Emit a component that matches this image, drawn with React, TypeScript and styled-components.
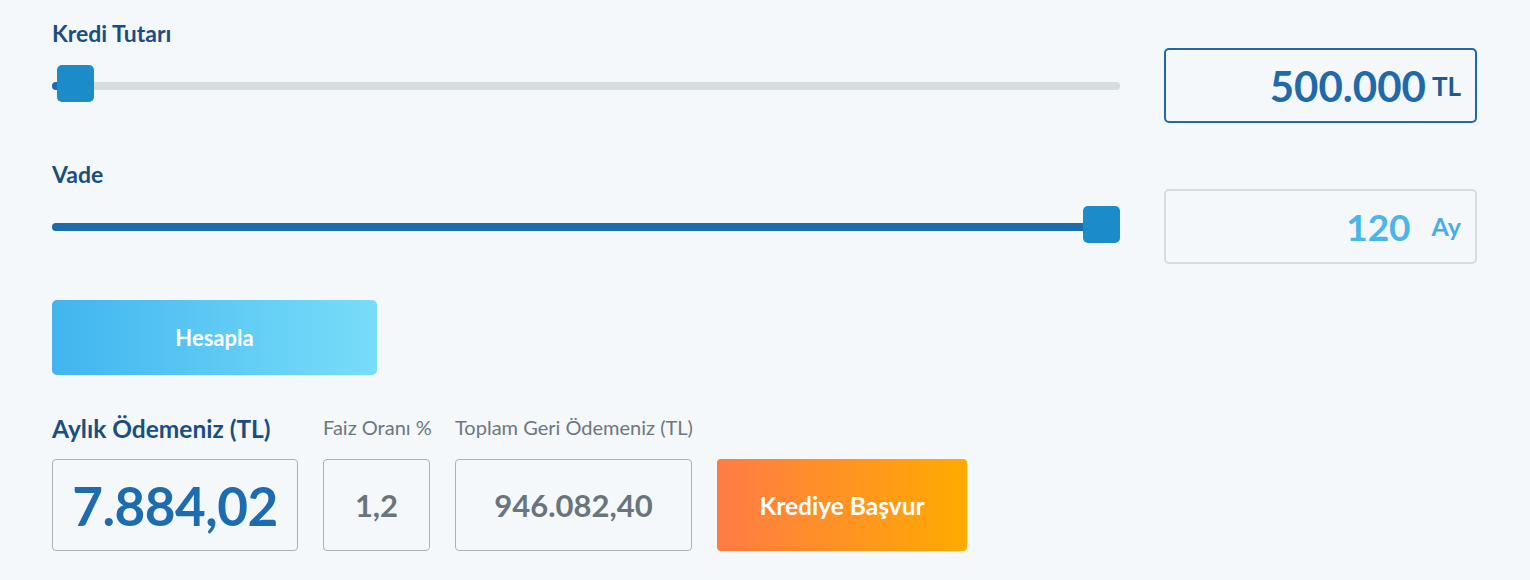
import styled, { createGlobalStyle } from "styled-components";

const GlobalStyle = createGlobalStyle`
  html, body {
    margin: 0;
    padding: 0;
    background: #f4f8fb;
    font-family: Lato, "Open Sans", sans-serif;
  }
  * {
    box-sizing: border-box;
  }
`;

const Page = styled.div`
  padding: 18px 53px 0 52px;
  display: flex;
  flex-direction: column;
`;

const Field = styled.div`
  display: flex;
  flex-direction: column;
  margin-bottom: 36px;
`;

const Label = styled.div`
  font-size: 23px;
  line-height: 30px;
  font-weight: 700;
  color: #1b4e80;
`;

const FieldRow = styled.div`
  display: flex;
  align-items: center;
  gap: 44px;
`;

const Track = styled.div`
  position: relative;
  flex: 1;
  height: 8px;
  border-radius: 4px;
  background: #d5dde1;
`;

const Fill = styled.div`
  position: absolute;
  left: 0;
  top: 0;
  bottom: 0;
  border-radius: 4px 0 0 4px;
  background: #1c6cb0;
`;

const Thumb = styled.div`
  position: absolute;
  top: 50%;
  width: 37px;
  height: 37px;
  margin-top: -21px;
  border-radius: 5px;
  background: #1b8cc7;
`;

const ValueBox = styled.div<{ $active?: boolean }>`
  width: 313px;
  height: 75px;
  display: flex;
  align-items: center;
  justify-content: flex-end;
  padding-right: 14px;
  border: 2px solid ${(p) => (p.$active ? "#1f69a8" : "#d4dce1")};
  border-radius: 5px;
  gap: ${(p) => (p.$active ? "6px" : "21px")};
`;

const Amount = styled.span<{ $active?: boolean }>`
  font-weight: 700;
  font-size: ${(p) => (p.$active ? "42px" : "37px")};
  line-height: 1;
  color: ${(p) => (p.$active ? "#1e6aab" : "#4bb4ea")};
`;

const Unit = styled.span<{ $active?: boolean }>`
  font-weight: 700;
  font-size: ${(p) => (p.$active ? "26px" : "25px")};
  line-height: 1;
  color: ${(p) => (p.$active ? "#1d5b93" : "#4aaee6")};
`;

const PrimaryButton = styled.button`
  width: 325px;
  height: 75px;
  border: none;
  border-radius: 5px;
  background: linear-gradient(90deg, #41b5f0 0%, #78ddf9 100%);
  color: #fff;
  font-family: inherit;
  font-size: 22px;
  font-weight: 700;
  margin-bottom: 37px;
  cursor: pointer;
`;

const Results = styled.div`
  display: flex;
  align-items: flex-end;
  gap: 25px;
`;

const ResultCol = styled.div<{ $w: number }>`
  width: ${(p) => p.$w}px;
  flex: none;
  display: flex;
  flex-direction: column;
`;

const ResultLabel = styled.div<{ $main?: boolean }>`
  font-size: ${(p) => (p.$main ? "24.5px" : "20px")};
  font-weight: ${(p) => (p.$main ? 700 : 400)};
  line-height: 30px;
  white-space: nowrap;
  color: ${(p) => (p.$main ? "#1b4e80" : "#6c7780")};
  margin-bottom: ${(p) => (p.$main ? "15px" : "17px")};
`;

const ResultBox = styled.div`
  height: 92px;
  display: flex;
  align-items: center;
  justify-content: center;
  border: 1px solid #aab2b8;
  border-radius: 4px;
`;

const ResultValue = styled.span<{ $main?: boolean }>`
  font-weight: 700;
  font-size: ${(p) => (p.$main ? "53px" : "31px")};
  line-height: 1;
  letter-spacing: ${(p) => (p.$main ? "-0.5px" : "0")};
  color: ${(p) => (p.$main ? "#1d6cb0" : "#6a747c")};
`;

const ApplyButton = styled.button`
  width: 250px;
  height: 92px;
  flex: none;
  border: none;
  border-radius: 4px;
  background: linear-gradient(90deg, #ff7b46 0%, #ffab00 100%);
  color: #fff;
  font-family: inherit;
  font-size: 24.5px;
  font-weight: 700;
  cursor: pointer;
`;

const THUMB = 37;

const Slider = ({ ratio }: { ratio: number }) => {
  const offset = `calc(${ratio * 100}% - ${ratio * THUMB}px)`;
  return (
    <Track>
      <Fill style={{ width: `calc(${ratio * 100}% - ${ratio * THUMB}px + ${THUMB / 2}px)` }} />
      <Thumb style={{ left: offset }} />
    </Track>
  );
};

const App = () => {
  const amount = 500000;
  const term = 120;
  const amountRatio = (amount - 10000) / (100000000 - 10000);
  const termRatio = (term - 3) / (120 - 3);

  return (
    <>
      <GlobalStyle />
      <Page>
        <Field>
          <Label>Kredi Tutarı</Label>
          <FieldRow>
            <Slider ratio={amountRatio} />
            <ValueBox $active>
              <Amount $active>500.000</Amount>
              <Unit $active>TL</Unit>
            </ValueBox>
          </FieldRow>
        </Field>
        <Field>
          <Label>Vade</Label>
          <FieldRow>
            <Slider ratio={termRatio} />
            <ValueBox>
              <Amount>120</Amount>
              <Unit>Ay</Unit>
            </ValueBox>
          </FieldRow>
        </Field>
        <div>
          <PrimaryButton>Hesapla</PrimaryButton>
        </div>
        <Results>
          <ResultCol $w={246}>
            <ResultLabel $main>Aylık Ödemeniz (TL)</ResultLabel>
            <ResultBox>
              <ResultValue $main>7.884,02</ResultValue>
            </ResultBox>
          </ResultCol>
          <ResultCol $w={107}>
            <ResultLabel>Faiz Oranı %</ResultLabel>
            <ResultBox>
              <ResultValue>1,2</ResultValue>
            </ResultBox>
          </ResultCol>
          <ResultCol $w={237}>
            <ResultLabel>Toplam Geri Ödemeniz (TL)</ResultLabel>
            <ResultBox>
              <ResultValue>946.082,40</ResultValue>
            </ResultBox>
          </ResultCol>
          <ApplyButton>Krediye Başvur</ApplyButton>
        </Results>
      </Page>
    </>
  );
};

export default App;
